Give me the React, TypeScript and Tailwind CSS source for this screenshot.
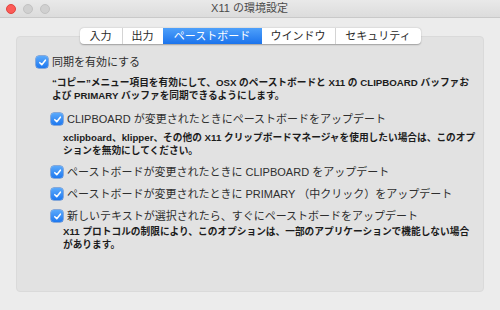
import React from "react";

const tabs = [
  { label: "入力", w: "w-[42px]" },
  { label: "出力", w: "w-[41px]" },
  { label: "ペーストボード", w: "w-[99px]", active: true },
  { label: "ウインドウ", w: "w-[73px]" },
  { label: "セキュリティ", w: "w-[86px]" },
];

function Check() {
  return (
    <span className="w-[12px] h-[12px] rounded-[3px] bg-gradient-to-b from-[#5aa9fb] to-[#1d78ef] flex items-center justify-center flex-shrink-0 shadow-[0_0_0_0.5px_#2a6fd0]">
      <svg width="9" height="9" viewBox="0 0 10 10" fill="none">
        <path d="M2 5.2 L4.2 7.4 L8.2 2.4" stroke="white" strokeWidth={1.7} strokeLinecap="round" strokeLinejoin="round" />
      </svg>
    </span>
  );
}

function Option({ children, className = "" }: { children: React.ReactNode; className?: string }) {
  return (
    <div className={`flex items-center gap-[4px] h-[14px] ${className}`}>
      <Check />
      <span className="text-[11px] text-[#2e2e2e] leading-[14px] whitespace-nowrap">{children}</span>
    </div>
  );
}

function Note({ children, className = "" }: { children: React.ReactNode; className?: string }) {
  return (
    <p className={`text-[9.7px] font-semibold text-[#1c1c1c] leading-[13px] whitespace-nowrap ${className}`}>
      {children}
    </p>
  );
}

export default function App() {
  return (
    <div
      className="w-[500px] h-[310px] bg-[#ececec] overflow-hidden flex flex-col"
      style={{ fontFamily: '"Liberation Sans", "Noto Sans CJK JP", sans-serif' }}
    >
      {/* title bar */}
      <div className="h-[18px] flex items-center bg-gradient-to-b from-[#e9e9e9] to-[#dcdcdc] border-b border-[#c9c9c9] relative">
        <div className="flex items-center gap-[7px] pl-[6px]">
          <span className="w-[10px] h-[10px] rounded-full bg-[#fc5b57] border border-[#e0443e]" />
          <span className="w-[10px] h-[10px] rounded-full bg-[#d0d0d0] border border-[#c2c2c2]" />
          <span className="w-[10px] h-[10px] rounded-full bg-[#d0d0d0] border border-[#c2c2c2]" />
        </div>
        <div className="flex-1 text-center text-[11px] text-[#4a4a4a] pr-[51px]">X11 の環境設定</div>
      </div>

      {/* tabs */}
      <div className="flex justify-center pt-[10px] relative z-10">
        <div className="flex h-[16px] rounded-[4px] bg-white shadow-[0_0.5px_1.5px_rgba(0,0,0,0.3)] overflow-hidden">
          {tabs.map((t, i) => (
            <div
              key={t.label}
              className={`${t.w} flex items-center justify-center text-[11px] ${
                t.active
                  ? "bg-gradient-to-b from-[#4ea0fa] to-[#1a73ec] text-white"
                  : "text-[#2a2a2a]"
              } ${i > 0 && !t.active && !tabs[i - 1].active ? "border-l border-[#d4d4d4]" : ""}`}
            >
              {t.label}
            </div>
          ))}
        </div>
      </div>

      {/* panel */}
      <div className="mx-[16px] -mt-[8px] h-[256px] rounded-[4px] bg-[#e2e2e2] border border-[#dadada] pl-[19px] pt-[18px]">
        <Option>同期を有効にする</Option>
        <Note className="ml-[16px] mt-[7px]">
          “コピー”メニュー項目を有効にして、OSX のペーストボードと X11 の CLIPBOARD バッファお
          <br />
          よび PRIMARY バッファを同期できるようにします。
        </Note>

        <div className="ml-[15px]">
          <Option className="mt-[10px]">CLIPBOARD が変更されたときにペーストボードをアップデート</Option>
          <Note className="ml-[12px] mt-[5px]">
            xclipboard、klipper、その他の X11 クリップボードマネージャを使用したい場合は、このオプ
            <br />
            ションを無効にしてください。
          </Note>

          <Option className="mt-[8px]">ペーストボードが変更されたときに CLIPBOARD をアップデート</Option>
          <Option className="mt-[8px]">ペーストボードが変更されたときに PRIMARY （中クリック）をアップデート</Option>
          <Option className="mt-[8px]">新しいテキストが選択されたら、すぐにペーストボードをアップデート</Option>
          <Note className="ml-[12px] mt-[2px]">
            X11 プロトコルの制限により、このオプションは、一部のアプリケーションで機能しない場合
            <br />
            があります。
          </Note>
        </div>
      </div>
    </div>
  );
}
